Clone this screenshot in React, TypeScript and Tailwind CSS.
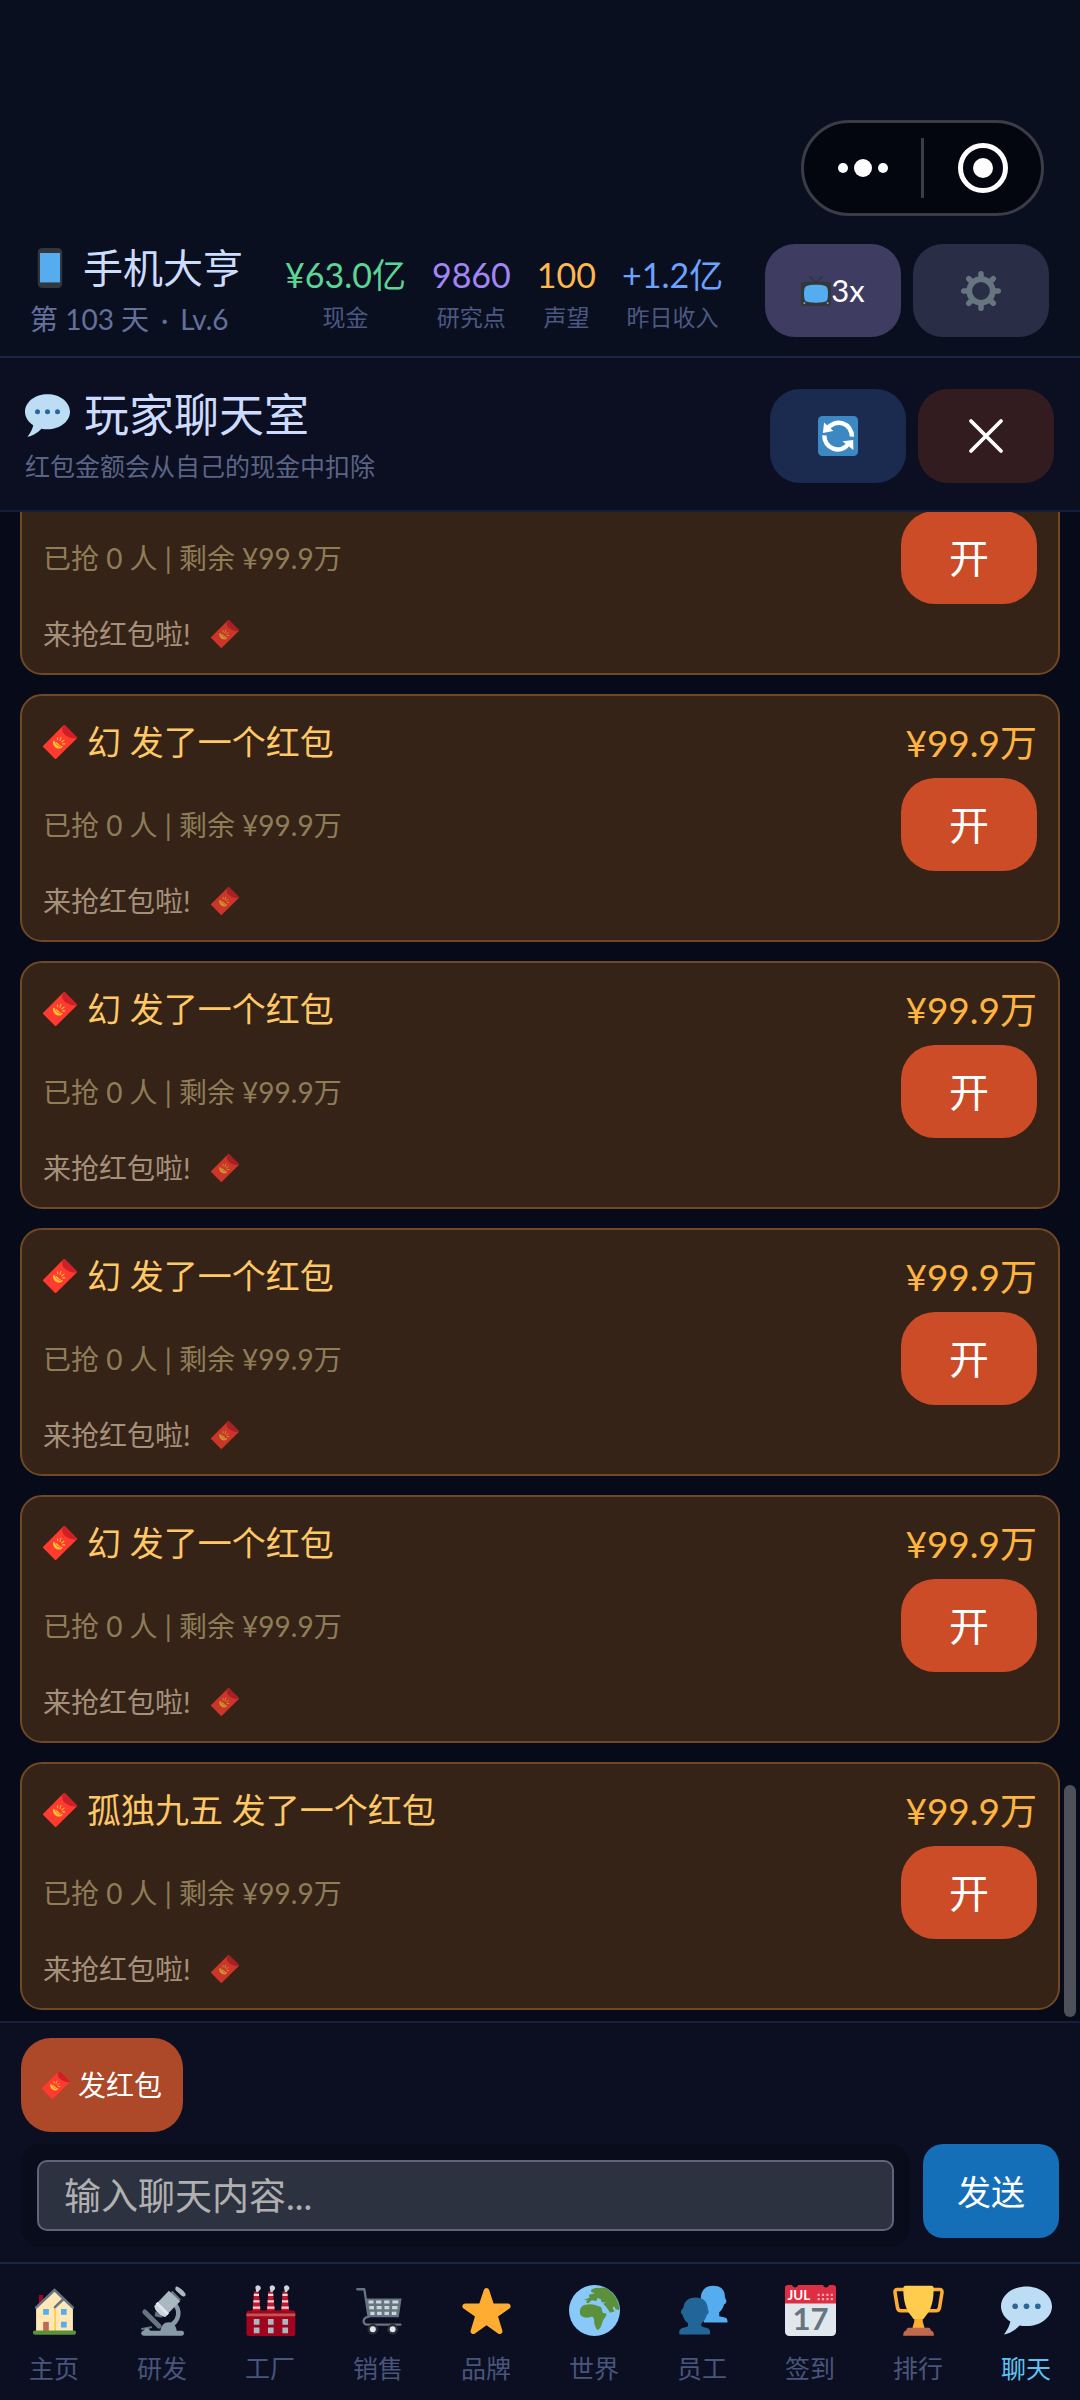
import { useState, type ReactNode } from "react"

type Stat = { label: string; value: string; color: string }
type Packet = { id: number; sender: string; amount: string; grabbed: number; note: string }
type Tab = { label: string; icon: ReactNode }

const STATS: Stat[] = [
  { label: "现金", value: "¥63.0亿", color: "text-[#5cd695]" },
  { label: "研究点", value: "9860", color: "text-[#a287f4]" },
  { label: "声望", value: "100", color: "text-[#ffb84d]" },
  { label: "昨日收入", value: "+1.2亿", color: "text-[#6ba3ff]" },
]

const PACKETS: Packet[] = ["幻", "幻", "幻", "幻", "幻", "孤独九五"].map((sender, i) => ({
  id: i,
  sender,
  amount: "¥99.9万",
  grabbed: 0,
  note: "来抢红包啦!",
}))

function Icon({ className, children }: { className: string; children: ReactNode }) {
  return (
    <svg viewBox="0 0 36 36" className={`shrink-0 ${className}`} aria-hidden="true">
      {children}
    </svg>
  )
}

function PhoneIcon() {
  return (
    <Icon className="size-10">
      <rect x="7" width="22" height="36" rx="4" fill="#31373d" />
      <path fill="#55acee" d="M9 4.5h18V31H9z" />
    </Icon>
  )
}

function ChatIcon({ className }: { className: string }) {
  return (
    <Icon className={className}>
      <path
        fill="#bdddf4"
        d="M18 1C8.059 1 0 7.268 0 15c0 4.368 2.574 8.268 6.604 10.835C6.08 28.144 4.859 31.569 2 35c5.758-.96 9.439-4.761 11.1-6.43 1.568.28 3.205.43 4.9.43 9.941 0 18-6.268 18-14S27.941 1 18 1z"
      />
      <g fill="#2a6797">
        <circle cx="10" cy="15" r="2" />
        <circle cx="18" cy="15" r="2" />
        <circle cx="26" cy="15" r="2" />
      </g>
    </Icon>
  )
}

function EnvelopeIcon({ className }: { className: string }) {
  return (
    <Icon className={className}>
      <path
        fill="#ff3b30"
        d="M21.5.6a1.5 1.5 0 0 1 2 0l12 12a1.3 1.3 0 0 1 0 2L14.3 35.5a1.3 1.3 0 0 1-2 0L.5 23.6a1.3 1.3 0 0 1 0-2z"
      />
      <path fill="#cf2029" d="M21.5.6a1.5 1.5 0 0 1 2 0l12 12a1.3 1.3 0 0 1 0 2c-5 .2-10.5-2-13.5-5.500C20 6.700 19.500 3.500 21.500.6z" />
      <path fill="#ffc233" d="M11 16.500c1.500 1.800 3 1.200 4.500 2.500s2.500 3 5.500 3.500c-1 2.200-3.800 3-6.500 2s-4.800-4.800-3.500-8z" />
      <path
        stroke="#ffc233"
        strokeWidth="1.1"
        strokeLinecap="round"
        d="M15.500 15.500v-2M18 16.500l1-3.500M19.800 18l2.500-2M20.800 20h2.300"
      />
      <path stroke="#e8622c" strokeWidth=".9" fill="none" d="M13 18c1 3 3 4.500 6 4.800" />
    </Icon>
  )
}

function TvIcon() {
  return (
    <Icon className="size-[30px]">
      <path d="M10.5 1 18 8l7.5-7" fill="none" stroke="#31373d" strokeWidth="2" strokeLinecap="round" />
      <rect y="7" width="36" height="29" rx="4" fill="#31373d" />
      <path
        fill="#55acee"
        d="M10 11c5-.7 11-.7 16 0 4 .5 5.500 2 6 5 .5 4 .5 7 0 11-.5 3-2 4-6 4.500-5 .6-11 .6-16 0-4-.5-5.500-1.500-6-4.500-.5-4-.5-7 0-11 .5-3 2-4.500 6-5z"
      />
      <circle cx="4" cy="32.5" r="1.3" fill="#8899a6" />
      <circle cx="32" cy="32.5" r="1.3" fill="#8899a6" />
    </Icon>
  )
}

function GearIcon() {
  return (
    <Icon className="size-10">
      <circle cx="18" cy="18" r="10.6" fill="none" stroke="#66757f" strokeWidth="5.2" />
      <g stroke="#66757f" strokeWidth="5" strokeLinecap="round">
        <path d="M18 2.5V6M18 30v3.5M2.5 18H6M30 18h3.5" />
        <path d="m7 7 2.5 2.5M26.5 26.5 29 29M7 29l2.5-2.5M26.5 9.5 29 7" />
      </g>
    </Icon>
  )
}

function RefreshIcon() {
  return (
    <Icon className="size-10">
      <rect width="36" height="36" rx="4" fill="#3b88c3" />
      <path
        fill="none"
        stroke="#fff"
        strokeWidth="4"
        d="M8.5 11.5A12 12 0 0 1 30.5 18.500M27.500 25A12 12 0 0 1 5.700 17.500"
      />
      <path fill="#fff" d="M5.5 5.8 4.4 15.2 13.8 13.6zM31.8 30.5 31.7 21.5 22 22.8z" />
    </Icon>
  )
}

const TABS: Tab[] = [
  {
    label: "主页",
    icon: (
      <>
        <path fill="#a0041e" d="M7 7h3v9H7z" />
        <path fill="#ffe8b6" d="M5 16 18 3.5 31 16v17H5z" />
        <path fill="#ffcc4d" d="M17.8 15.5h1.3V33h-1.3z" />
        <path
          fill="none"
          stroke="#66757f"
          strokeWidth="1.8"
          strokeLinecap="round"
          d="M5 16 18 3.5 31 16M18.3 15.6l5.7-5.4"
        />
        <path fill="#55acee" d="M10 17h4v4h-4zM22.6 17h4v4h-4zM22.6 26h4v4h-4z" />
        <path fill="#c1694f" d="M10 26h4v7h-4z" />
        <rect x="2.8" y="32.2" width="30.4" height="2.9" rx="1.4" fill="#5c913b" />
      </>
    ),
  },
  {
    label: "研发",
    icon: (
      <>
        <path fill="none" stroke="#8899a6" strokeWidth="3.2" d="M26.5 13.5c4 4 4 11.5-3.5 15.500" />
        <path stroke="#66757f" strokeWidth="3.5" strokeLinecap="round" d="m5.5 19 10 10" />
        <path stroke="#66757f" strokeWidth="1.4" strokeLinecap="round" d="m3.5 31 6.5-1.2" />
        <path fill="#8899a6" d="M16.5 33c0-9 11.5-9 11.5 0z" />
        <rect x="3" y="32.3" width="30.2" height="3.5" rx="1.7" fill="#8899a6" />
        <path fill="#8899a6" d="M6 30.5h2l1.5 2h-5z" />
        <path fill="#66757f" d="m25 4 6 6-3 3-6-6zM13 18.5l5.5 4-2 .5-4-1z" />
        <path fill="#aab8c2" d="m22.5 4 8 7.5L20 22c-2 1-8.500-4.500-7.500-7.500z" />
        <path fill="#ccd6dd" d="m14.5 12 8 8-2.5 2.500c-3 0-8-5-7.500-7.500z" />
        <path fill="#e1e8ed" d="m14.5 12 8 8-1.3 1.3-8-8z" />
        <path fill="#aab8c2" d="M27.5 1.200c1-1.200 7.800 4.600 6.800 6-.7 1.200-2 1-3 .2l-3.500-3.200c-1-.8-1-2-.3-3z" />
      </>
    ),
  },
  {
    label: "工厂",
    icon: (
      <>
        <path fill="#be1931" d="M6.4 4.5h3.2L11 19H5.200zM16.500 4.500h3.200L21.100 19h-5.800zM26.600 4.500h3.200L31.200 19h-5.800z" />
        <path
          stroke="#f5d5d9"
          strokeWidth="1.6"
          d="M6.2 7h3.700M5.900 11.500h4.400M5.600 16h5.100M16.300 7h3.700M16 11.500h4.400M15.700 16h5.100M26.400 7h3.700M26.100 11.500h4.400M25.800 16h5.100"
        />
        <path
          fill="#ccd6dd"
          d="M7.300 2c0-2.500 3.500-2.500 3.800 0 .2 1.500-1 1.500-1.800 3H8zM17.400 2c0-2.500 3.500-2.500 3.800 0 .2 1.500-1 1.500-1.800 3h-1.300zM27.500 2c0-2.500 3.500-2.500 3.800 0 .2 1.500-1 1.500-1.800 3h-1.300z"
        />
        <rect x="1" y="18" width="34.5" height="18" rx="2" fill="#a0041e" />
        <path fill="#c1554f" d="M1 20.2h34.5v1.9H1z" />
        <path
          fill="#aab8c2"
          d="M6.200 24h4v4h-4zM16.200 24h4v4h-4zM26.400 24h4v4h-4zM6.200 30h4v4h-4zM16.200 30h4v4h-4zM26.400 30h4v4h-4z"
        />
      </>
    ),
  },
  {
    label: "销售",
    icon: (
      <>
        <path fill="#66757f" d="M9.4 9.5h24.900l-2 13.300H11.500z" />
        <path
          fill="none"
          stroke="#66757f"
          strokeWidth="1.6"
          strokeLinecap="round"
          strokeLinejoin="round"
          d="M3 3h5l3 19.500c-4.500.3-4.500 5.500-1 5.500h23.500"
        />
        <path
          stroke="#ccd6dd"
          strokeWidth="2.2"
          d="M11 12h3.500M16.300 12h3.700M22 12h3.700M27.800 12H32M11.500 16h3.300M16.700 16h3.500M22.200 16h3.400M27.600 16h3.800M12.200 20h3M17 20h3.200M22.200 20h3.200M27.400 20h3.200"
        />
        <circle cx="14" cy="31.200" r="3.8" fill="#292f33" />
        <circle cx="28" cy="31.200" r="3.8" fill="#292f33" />
        <circle cx="14" cy="31.200" r="2.1" fill="#e1e8ed" />
        <circle cx="28" cy="31.200" r="2.1" fill="#e1e8ed" />
      </>
    ),
  },
  {
    label: "品牌",
    icon: (
      <path
        fill="#ffac33"
        d="M27.287 34.627c-.404 0-.806-.124-1.152-.371L18 28.422l-8.135 5.834a1.97 1.97 0 0 1-2.312-.008 1.971 1.971 0 0 1-.721-2.194l3.034-9.792-8.062-5.681a1.98 1.98 0 0 1-.708-2.203 1.978 1.978 0 0 1 1.866-1.363L12.947 13l3.179-9.549a1.976 1.976 0 0 1 3.749 0L23 13l10.036.015a1.975 1.975 0 0 1 1.159 3.566l-8.062 5.681 3.034 9.792a1.97 1.97 0 0 1-.72 2.194 1.957 1.957 0 0 1-1.16.379z"
      />
    ),
  },
  {
    label: "世界",
    icon: (
      <>
        <circle cx="18" cy="18" r="18" fill="#88c9f9" />
        <path
          fill="#5c913b"
          d="M7.8 17.500c.5-1.500 1.700-3 3-3.300 2.500-.8 5-.8 7.200-.3l4.500 1.600c.7 1 .8 3 1.500 4.300l2.500.4c-.2 2-1.300 3-2.300 4.500-.8 1.500-1 3.500-2 5.300l-1.800 2c-1.500-1-2-3-2.600-5 0-1.800.2-3-1-4.500-1.500-.5-2.800.7-4.300.6-1.500-.1-3.300-.6-4.300-1.700-.5-1.200-.6-2.800-.4-3.900z"
        />
        <path
          fill="#5c913b"
          d="M10.500 10.500 14.500 9l-.5-2.200 4.300-.9-2.800-1.200.3-1.600c2-1 4-1.300 6-1 1-.5 3-.6 4 .1 4.500 2.200 7.500 6 8.900 10.500.7 2 .9 3.600.8 5.100l-2.700-.9-1-2-1 1.600 1.500 2-3.300 1c-1-1.500-2-3.200-3.500-4.800l-1.500-1.500 2.300-.8-3.300-.3-.5-2-2.500-1-.5 2.200-3.500-.5-2.200 2-1.800-.5 1-1.500z"
        />
      </>
    ),
  },
  {
    label: "员工",
    icon: (
      <>
        <path
          fill="#55acee"
          d="M16.800 9C17 3.500 20.500.5 25.500.5c5.500 0 8.500 3 8.300 8l1 2.500c.2 1.500-.5 2.500-1.500 2.500-.7 2.500-2 4.500-3.500 5.800V22l4 1c1.500.5 2 1.500 1.800 3.500H19z"
        />
        <path
          fill="#226699"
          d="M4.500 16C5 11.500 8 8.800 13.200 8.800s8 2.700 8.500 7.200v1.300c.9.4.9 3.200-.6 3.700-.7 2.500-2 4.700-3.900 6v2.200c1.500 1 4 .8 5 1.600 1.200.8 1.300 2.400 1.100 3.600-.2.5-.6.6-1 .6H2.500c-.5 0-.8-.2-.9-.6-.2-1.300 0-2.800 1.200-3.600 1-.8 3.500-.6 5-1.600V27c-1.900-1.300-3.200-3.500-3.900-6-1.300-.5-1.200-3.300-.4-3.700z"
        />
      </>
    ),
  },
  {
    label: "签到",
    icon: (
      <>
        <path fill="#e1e8ed" d="M0 12h36v21a3 3 0 0 1-3 3H3a3 3 0 0 1-3-3z" />
        <path
          fill="#dd2e44"
          d="M2 0h3a2.200 2.200 0 0 0 4.300 0h17.500a2.200 2.200 0 0 0 4.300 0H34a2 2 0 0 1 2 2v11H0V2a2 2 0 0 1 2-2z"
        />
        <text x="1.8" y="10.8" fontSize="9.5" fontWeight="700" fill="#fff" className="font-['Lato',sans-serif]">
          JUL
        </text>
        <path stroke="#f4abba" strokeWidth="1.5" strokeDasharray="1.5 1.6" d="M23 7h11.500M23 10h11.500" />
        <text
          x="18"
          y="32"
          fontSize="22"
          fontWeight="700"
          textAnchor="middle"
          fill="#66757f"
          className="font-['Lato',sans-serif]"
        >
          17
        </text>
      </>
    ),
  },
  {
    label: "排行",
    icon: (
      <>
        <path
          fill="none"
          stroke="#ffac33"
          strokeWidth="2.5"
          strokeLinejoin="round"
          d="M9 3.200H3c-1.200 0-1.700.8-1.600 2l1.800 11c.3 1.500 1 2 2.300 2H12M27 3.200h6c1.200 0 1.700.8 1.600 2l-1.800 11c-.3 1.500-1 2-2.300 2H24"
        />
        <path fill="#ffac33" d="M15 22h6v4l1.500 5h-9L15 26z" />
        <path
          fill="#ffcc4d"
          d="M7.300 2.500c0-1.500.7-2 2-2h17.400c1.300 0 2 .5 2 2 0 7-1 12-3.500 16.500L21.500 24h-7l-3.700-5C8.300 14.500 7.300 9.500 7.300 2.500z"
        />
        <path
          fill="#c1694f"
          d="M11 30.200h14.200c1 0 1.500 1 1.500 2 1.500.2 2.200 1.300 2.200 3.600H7.200c0-2.300.7-3.400 2.200-3.600 0-1 .6-2 1.600-2z"
        />
      </>
    ),
  },
  { label: "聊天", icon: <ChatIcon className="size-full" /> },
]

function StatusHeader() {
  return (
    <header className="border-b-2 border-[#1a2644] bg-[#0a0f20] pt-[120px]">
      <div className="flex justify-end pr-9">
        <div className="flex h-24 w-[243px] items-center rounded-full border-3 border-[#3b3c48] bg-[#04060f]">
          <button aria-label="更多" className="flex flex-1 items-center justify-center gap-[6px]">
            <span className="size-[10px] rounded-full bg-white" />
            <span className="size-[18px] rounded-full bg-white" />
            <span className="size-[10px] rounded-full bg-white" />
          </button>
          <span className="h-[60px] w-[3px] bg-[#3b3c48]" />
          <button aria-label="关闭小程序" className="flex flex-1 items-center justify-center">
            <span className="flex size-[50px] items-center justify-center rounded-full border-5 border-white">
              <span className="size-5 rounded-full bg-white" />
            </span>
          </button>
        </div>
      </div>

      <div className="flex items-start justify-between pt-7 pr-[31px] pb-[19px] pl-[30px]">
        <div className="flex">
          <div className="w-[255px]">
            <h1 className="flex h-12 items-center gap-[13px] text-[40px] leading-none text-[#ccdcff]">
              <PhoneIcon />
              手机大亨
            </h1>
            <p className="mt-[9px] flex gap-3 text-[28px] leading-9 text-[#63719c]">
              <span>第 103 天</span>
              <span>·</span>
              <span>Lv.6</span>
            </p>
          </div>
          <dl className="flex gap-[26px] pt-[3px] text-center">
            {STATS.map((s) => (
              <div key={s.label} className="flex flex-col-reverse items-center">
                <dt className="text-[23px] leading-10 text-[#495980]">{s.label}</dt>
                <dd className={`text-[34px] leading-[44px] ${s.color}`}>{s.value}</dd>
              </div>
            ))}
          </dl>
        </div>
        <div className="flex gap-3">
          <button className="flex h-[93px] w-[136px] items-center justify-center rounded-[30px] bg-[#3f3c62] text-[31px] text-white">
            <TvIcon />
            3x
          </button>
          <button
            aria-label="设置"
            className="flex h-[93px] w-[136px] items-center justify-center rounded-[30px] bg-[#292d45]"
          >
            <GearIcon />
          </button>
        </div>
      </div>
    </header>
  )
}

function RoomHeader() {
  return (
    <section className="flex items-start justify-between border-b-2 border-[#151c37] bg-[#0c0f21] pt-[31px] pr-[26px] pb-[27px] pl-[25px]">
      <div>
        <h2 className="flex h-[52px] items-center gap-[14px] text-[45px] leading-none text-[#ccdcff]">
          <ChatIcon className="size-[45px]" />
          玩家聊天室
        </h2>
        <p className="mt-2 text-[25px] leading-[34px] text-[#5a6585]">红包金额会从自己的现金中扣除</p>
      </div>
      <div className="flex gap-3">
        <button
          aria-label="刷新"
          className="flex h-[94px] w-[136px] items-center justify-center rounded-[30px] bg-[#1b2a4f]"
        >
          <RefreshIcon />
        </button>
        <button
          aria-label="关闭"
          className="flex h-[94px] w-[136px] items-center justify-center rounded-[30px] bg-[#321c20]"
        >
          <Icon className="size-9">
            <path stroke="#fff" strokeWidth="3.8" strokeLinecap="round" d="m3 3 30 30M33 3 3 33" />
          </Icon>
        </button>
      </div>
    </section>
  )
}

function PacketCard({ packet }: { packet: Packet }) {
  return (
    <li className="rounded-[22px] border-2 border-[#6f4825] bg-[#352317] px-[21px] pt-[22px] pb-[18px]">
      <div className="flex h-12 items-center justify-between">
        <p className="flex items-center gap-[10px] text-[34px] leading-none text-[#ffc866]">
          <EnvelopeIcon className="size-[34px]" />
          {packet.sender} 发了一个红包
        </p>
        <p className="text-[37px] leading-none text-[#ffb440]">{packet.amount}</p>
      </div>
      <div className="mt-3 flex items-center justify-between">
        <p className="text-[28px] text-[#8f7d57]">
          已抢 {packet.grabbed} 人 | 剩余 {packet.amount}
        </p>
        <button className="h-[93px] w-[136px] rounded-[34px] bg-[#cc4c28] text-[40px] text-white">开</button>
      </div>
      <p className="mt-2 flex h-[43px] items-center gap-5 text-[28px] text-[#a5907a]">
        {packet.note}
        <EnvelopeIcon className="size-7 opacity-75" />
      </p>
    </li>
  )
}

function Composer() {
  const [draft, setDraft] = useState("")

  return (
    <section className="border-t-2 border-[#182039] bg-[#0c0f21] px-[21px] py-[15px]">
      <button className="flex h-[94px] items-center gap-2 rounded-[30px] bg-[#ad4828] px-[21px] text-[28px] text-white">
        <EnvelopeIcon className="size-7" />
        发红包
      </button>
      <form className="mt-3 flex items-start gap-[13px]" onSubmit={(e) => e.preventDefault()}>
        <div className="flex-1 rounded-[20px] bg-[#090c1b] p-4">
          <input
            aria-label="聊天内容"
            value={draft}
            onChange={(e) => setDraft(e.target.value)}
            placeholder="输入聊天内容..."
            className="block h-[71px] w-full rounded-[10px] border-2 border-[#62627a] bg-[#2d3240] px-[25px] text-[37px] text-white placeholder:text-[#b0b0b0]"
          />
        </div>
        <button className="h-[94px] w-[136px] rounded-[20px] bg-[#156eb8] text-[34px] text-white">发送</button>
      </form>
    </section>
  )
}

function TabBar() {
  return (
    <nav className="grid grid-cols-10 border-t-2 border-[#1a2644] bg-[#0c0f21] pt-[21px] pb-3">
      {TABS.map((tab) => {
        const active = tab.label === "聊天"
        return (
          <a
            key={tab.label}
            href="#"
            aria-current={active ? "page" : undefined}
            className="flex flex-col items-center"
          >
            <Icon className="size-[51px]">{tab.icon}</Icon>
            <span className={`mt-3 text-[25px] leading-10 ${active ? "text-[#5cc4f5]" : "text-[#48557c]"}`}>
              {tab.label}
            </span>
          </a>
        )
      })}
    </nav>
  )
}

export default function App() {
  return (
    <div className="flex h-screen w-full flex-col bg-[#070a19] font-['Lato','Noto_Sans_CJK_SC',sans-serif]">
      <StatusHeader />
      <RoomHeader />
      <main className="relative min-h-0 flex-1">
        {/* reversed column keeps the newest message in view */}
        <div className="flex h-full flex-col-reverse overflow-y-auto [scrollbar-width:none]">
          <ul className="flex shrink-0 flex-col gap-[19px] px-5 pb-[11px]">
            {PACKETS.map((p) => (
              <PacketCard key={p.id} packet={p} />
            ))}
          </ul>
        </div>
        <div className="absolute right-1 bottom-1 h-[232px] w-3 rounded-full bg-[#4f515a]" />
      </main>
      <Composer />
      <TabBar />
    </div>
  )
}
